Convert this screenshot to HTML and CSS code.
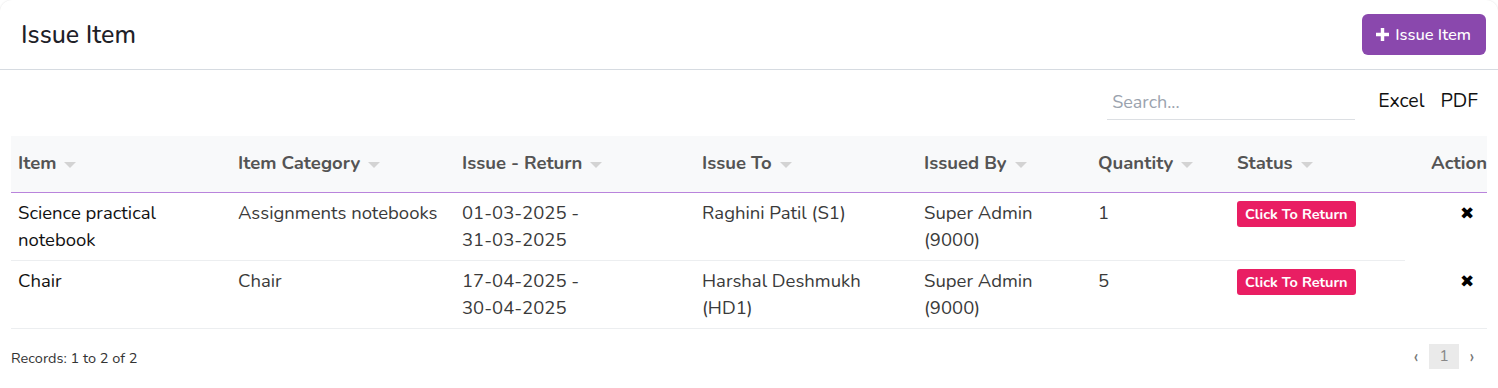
FILE: index.html
```html
<!DOCTYPE html>
<html>
<head>
<meta charset="utf-8">
<link rel="stylesheet" href="styles.css">
</head>
<body>
<div class="card">
  <div class="card-header">
    <h1 class="title">Issue Item</h1>
    <button class="btn-add"><svg class="plus" viewBox="0 0 12 12" width="13" height="13"><path d="M4.4 0h3.2v4.4H12v3.2H7.6V12H4.4V7.6H0V4.4h4.4z" fill="#fff"/></svg>Issue Item</button>
  </div>
  <div class="card-body">
    <div class="toolbar">
      <input class="search" type="text" placeholder="Search...">
      <span class="export">Excel</span>
      <span class="export">PDF</span>
    </div>
    <div class="table-wrap">
      <table class="grid">
        <colgroup>
          <col class="c1"><col class="c2"><col class="c3"><col class="c4"><col class="c5"><col class="c6"><col class="c7"><col class="c8">
        </colgroup>
        <thead>
          <tr>
            <th>Item<span class="caret"></span></th>
            <th>Item Category<span class="caret"></span></th>
            <th>Issue - Return<span class="caret"></span></th>
            <th>Issue To<span class="caret"></span></th>
            <th>Issued By<span class="caret"></span></th>
            <th>Quantity<span class="caret"></span></th>
            <th>Status<span class="caret"></span></th>
            <th class="th-action">Action</th>
          </tr>
        </thead>
        <tbody>
          <tr>
            <td class="dark">Science practical notebook</td>
            <td>Assignments notebooks</td>
            <td>01-03-2025 -<br>31-03-2025</td>
            <td>Raghini Patil (S1)</td>
            <td>Super Admin<br>(9000)</td>
            <td>1</td>
            <td><span class="badge">Click To Return</span></td>
            <td class="action no-border"><span class="xmark">✖</span></td>
          </tr>
          <tr>
            <td class="dark">Chair</td>
            <td>Chair</td>
            <td>17-04-2025 -<br>30-04-2025</td>
            <td>Harshal Deshmukh<br>(HD1)</td>
            <td>Super Admin<br>(9000)</td>
            <td>5</td>
            <td><span class="badge">Click To Return</span></td>
            <td class="action"><span class="xmark">✖</span></td>
          </tr>
        </tbody>
      </table>
    </div>
    <div class="footer">
      <span class="records">Records: 1 to 2 of 2</span>
      <div class="pager">
        <span class="pg-arrow">‹</span>
        <span class="pg-num">1</span>
        <span class="pg-arrow">›</span>
      </div>
    </div>
  </div>
</div>
</body>
</html>
```
FILE: styles.css
```css
* { box-sizing: border-box; }
html, body { margin: 0; padding: 0; background: #fff; }
body { font-family: "Nunito", "Open Sans", "Noto Sans", sans-serif; color: #333; }

.card {
  width: 1498px;
  height: 388px;
  border-radius: 12px 12px 0 0;
  box-shadow: 0 0 2px rgba(0,0,0,0.12);
  overflow: hidden;
  background: #fff;
}

.card-header {
  height: 70px;
  display: flex;
  align-items: center;
  justify-content: space-between;
  padding: 0 12px 0 21px;
  border-bottom: 1px solid #d6dbe1;
}
.title {
  margin: 0;
  font-size: 25px;
  font-weight: 500;
  color: #1e2128;
}
.btn-add {
  display: flex;
  align-items: center;
  gap: 6px;
  height: 41px;
  padding: 0 15px 0 14px;
  border: none;
  border-radius: 6px;
  background: #8a48ad;
  color: #fff;
  font-family: inherit;
  font-size: 16.5px;
  font-weight: 500;
}
.plus { display: block; }

.card-body { padding: 0 11px; }

.toolbar {
  height: 66px;
  display: flex;
  justify-content: flex-end;
  align-items: center;
  padding-right: 9px;
  padding-bottom: 3px;
}
.search {
  width: 248px;
  height: 34px;
  border: none;
  border-bottom: 1px solid #dcdfe3;
  padding: 0 5px;
  font-family: inherit;
  font-size: 18px;
  color: #333;
  outline: none;
  margin-right: 23px;
  margin-top: 2px;
}
.search::placeholder { color: #9ba3ae; }
.export {
  font-size: 19.5px;
  color: #111;
  margin-left: 16px;
  margin-bottom: 2px;
}
.export:first-of-type { margin-left: 0; }

.table-wrap { overflow: hidden; width: 1476px; }
.grid {
  table-layout: fixed;
  width: 1540px;
  border-collapse: collapse;
}
.c1 { width: 220px; }
.c2 { width: 224px; }
.c3 { width: 240px; }
.c4 { width: 222px; }
.c5 { width: 174px; }
.c6 { width: 139px; }
.c7 { width: 175px; }
.c8 { width: 146px; }

.grid th {
  height: 56px;
  background: #f8f9fa;
  border-bottom: 1px solid #b984dc;
  text-align: left;
  padding: 0 7px 1px;
  font-size: 18.5px;
  font-weight: 700;
  color: #545454;
  white-space: nowrap;
}
.grid th.th-action { padding-left: 26px; }
.caret {
  display: inline-block;
  width: 0;
  height: 0;
  margin-left: 8px;
  vertical-align: middle;
  border-left: 6px solid transparent;
  border-right: 6px solid transparent;
  border-top: 6px solid #d3d3d3;
}

.grid td {
  vertical-align: top;
  padding: 7px 7px 6px;
  font-size: 18.5px;
  line-height: 27px;
  color: #3a3a3a;
  border-bottom: 1px solid #eceef0;
}
.grid td.dark { color: #111; }
.grid td.no-border { border-bottom-color: transparent; }
.grid td.action { padding-left: 55px; }
.xmark {
  font-family: "DejaVu Sans", sans-serif;
  font-size: 17px;
  color: #000;
}
.badge {
  display: inline-block;
  margin-top: 1px;
  height: 26px;
  line-height: 26px;
  padding: 0 8px;
  border-radius: 3px;
  background: #e91e63;
  color: #fff;
  font-size: 14.5px;
  font-weight: 700;
  vertical-align: top;
}

.footer {
  display: flex;
  justify-content: space-between;
  align-items: center;
  padding: 15px 0 0;
}
.records {
  font-size: 14.5px;
  color: #333;
  margin-top: 2px;
}
.pager {
  display: flex;
  align-items: center;
  margin-right: 2px;
}
.pg-arrow {
  width: 26px;
  text-align: center;
  font-size: 19px;
  color: #777;
}
.pg-num {
  width: 30px;
  height: 25px;
  line-height: 25px;
  text-align: center;
  background: #eaeaea;
  color: #888;
  font-size: 16px;
}
```
